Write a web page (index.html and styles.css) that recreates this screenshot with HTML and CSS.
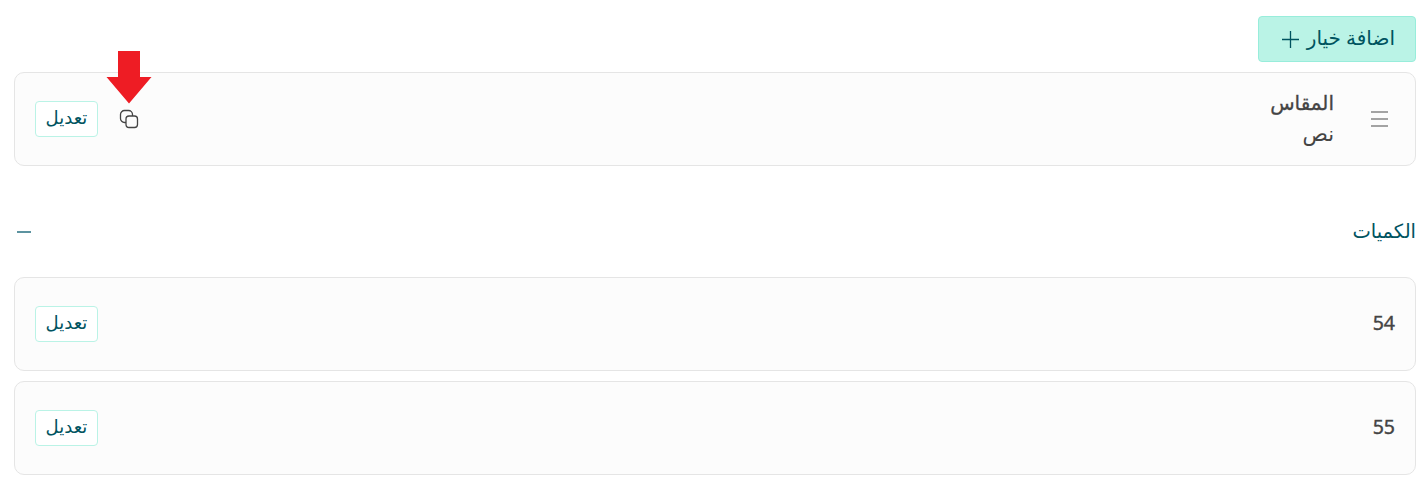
FILE: index.html
```html
<!DOCTYPE html>
<html lang="ar" dir="rtl">
<head>
    <meta charset="UTF-8">
    <meta name="viewport" content="width=device-width, initial-scale=1.0">
    <title>خيارات المنتج</title>
    <link rel="stylesheet" href="styles.css">
</head>
<body>
    <button class="add-option">
        <span class="add-label">اضافة خيار</span>
        <svg width="18" height="18" viewBox="0 0 18 18"><path d="M9.500 1v17M1 9.500h17"/></svg>
    </button>

    <!-- Option -->
    <div class="card">
        <svg class="drag-icon" width="17" height="18" viewBox="0 0 17 18"><path d="M0 2h17M0 9h17M0 16h17"/></svg>
        <div class="option-info">
            <span class="option-name">المقاس</span>
            <span class="option-type">نص</span>
        </div>
        <div class="actions">
            <div class="copy">
                <svg class="copy-icon" width="20" height="20" viewBox="0 0 20 20">
                    <path d="M7 13.500H5.500a4 4 0 0 1-4-4v-4a4 4 0 0 1 4-4h4a4 4 0 0 1 4 4V7"/>
                    <rect x="7" y="7" width="11.500" height="11.500" rx="3"/>
                </svg>
                <svg class="arrow" width="46" height="53" viewBox="0 0 46 53"><path d="M12 0h22v26h11.500L23 52.500.500 26H12z"/></svg>
            </div>
            <button class="edit"><span>تعديل</span></button>
        </div>
    </div>

    <!-- Quantities -->
    <div class="section-header">
        <h2>الكميات</h2>
        <span class="collapse"></span>
    </div>
    <div class="card">
        <span class="quantity">54</span>
        <div class="actions"><button class="edit"><span>تعديل</span></button></div>
    </div>
    <div class="card">
        <span class="quantity">55</span>
        <div class="actions"><button class="edit"><span>تعديل</span></button></div>
    </div>
</body>
</html>
```
FILE: styles.css
```css
* {
    box-sizing: border-box;
}
body {
    margin: 0;
    padding: 16px 12px 0 14px;
    background: #fff;
    color: #444;
    font-family: "Noto Sans", "DejaVu Sans", sans-serif;
    overflow: hidden;
}
button {
    font-family: inherit;
    color: #00535f;
    cursor: pointer;
    white-space: nowrap;
}
svg {
    display: block;
    fill: none;
    flex: none;
}
.add-option {
    display: flex;
    align-items: center;
    gap: 8px;
    width: 158px;
    height: 46px;
    padding: 0 20px;
    margin-bottom: 10px;
    font-size: 20px;
    background: #baf3e6;
    border: 1px solid #98eddb;
    border-radius: 4px;
}
.add-label {
    padding-bottom: 3px;
}
.add-option svg {
    stroke: #00535f;
    stroke-width: 1.3;
}
.card {
    display: flex;
    align-items: center;
    height: 94px;
    padding: 0 20px;
    margin-bottom: 10px;
    background: #fcfcfc;
    border: 1px solid #e5e5e5;
    border-radius: 10px;
}
.drag-icon {
    margin-right: 7px;
    stroke: #a3a3a3;
    stroke-width: 2;
}
.option-info {
    display: flex;
    flex-direction: column;
    margin-right: 37px;
    padding-bottom: 2px;
    font-size: 20px;
    line-height: 30px;
}
.option-name {
    -webkit-text-stroke: 0.3px #444;
}
.option-type {
    font-size: 21px;
}
.actions {
    display: flex;
    align-items: center;
    gap: 21px;
    margin-right: auto;
}
.copy {
    position: relative;
}
.copy-icon {
    stroke: #444;
    stroke-width: 1.3;
}
.arrow {
    position: absolute;
    left: -13px;
    bottom: 25px;
    fill: #ee1c24;
}
.edit {
    width: 63px;
    height: 36px;
    padding: 0 0 4px;
    font-size: 18px;
    background: #fff;
    border: 1px solid #baf3e6;
    border-radius: 4px;
}
.section-header {
    display: flex;
    align-items: center;
    justify-content: space-between;
    height: 101px;
    padding-top: 10px;
}
.section-header h2 {
    margin: 0;
    padding-bottom: 3px;
    font-size: 19.5px;
    font-weight: normal;
    color: #00535f;
}
.collapse {
    width: 14px;
    height: 2px;
    margin-left: 3px;
    background: #5c93a0;
}
.quantity {
    padding-bottom: 3px;
    font-size: 19.5px;
    -webkit-text-stroke: 0.4px #444;
}
```
